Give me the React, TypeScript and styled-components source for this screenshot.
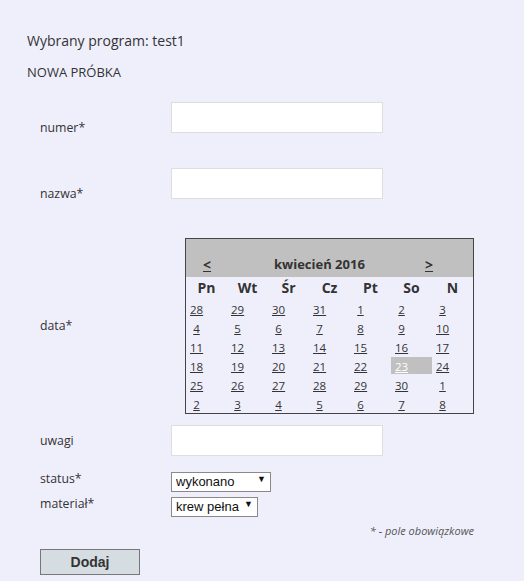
import React, { FC, ReactElement } from 'react';
import styled, { createGlobalStyle } from 'styled-components';

const GlobalStyle = createGlobalStyle`
    body {
        margin: 0;
        background: #efeffc;
        font-family: 'Open Sans', 'Noto Sans', sans-serif;
        color: #333;
    }
`;

const weekDays = ['Pn', 'Wt', 'Śr', 'Cz', 'Pt', 'So', 'N'];

const weeks: number[][] = [
    [28, 29, 30, 31, 1, 2, 3],
    [4, 5, 6, 7, 8, 9, 10],
    [11, 12, 13, 14, 15, 16, 17],
    [18, 19, 20, 21, 22, 23, 24],
    [25, 26, 27, 28, 29, 30, 1],
    [2, 3, 4, 5, 6, 7, 8],
];

const Calendar: FC = (): ReactElement => {
    return (
        <CalendarBox>
            <CalendarHead>
                <NavLink href="#">&lt;</NavLink>
                <MonthTitle>kwiecień 2016</MonthTitle>
                <NavLink href="#">&gt;</NavLink>
            </CalendarHead>
            <DayNames>
                {weekDays.map((d) => (
                    <DayName key={d}>{d}</DayName>
                ))}
            </DayNames>
            <DateGrid>
                {weeks.map((week, w) =>
                    week.map((day, i) => {
                        const selected = w === 3 && i === 5;
                        return (
                            <DateCell key={`${w}-${i}`} $selected={selected}>
                                <DateLink href="#" $selected={selected}>{day}</DateLink>
                            </DateCell>
                        );
                    })
                )}
            </DateGrid>
        </CalendarBox>
    );
};

const App: FC = (): ReactElement => {
    return (
        <Page>
            <GlobalStyle />
            <Heading>Wybrany program: test1</Heading>
            <SubHeading>NOWA PRÓBKA</SubHeading>
            <Form>
                <Row $gap={20}>
                    <Label>numer*</Label>
                    <Field>
                        <TextInput type="text" />
                        <Hint />
                    </Field>
                </Row>
                <Row $gap={15}>
                    <Label>nazwa*</Label>
                    <Field>
                        <TextInput type="text" />
                        <Hint />
                    </Field>
                </Row>
                <Row $gap={19}>
                    <Label>data*</Label>
                    <Field>
                        <Calendar />
                    </Field>
                </Row>
                <Row $gap={11}>
                    <Label>uwagi</Label>
                    <Field>
                        <TextInput type="text" />
                    </Field>
                </Row>
                <Row $gap={13}>
                    <Label>status*</Label>
                    <Field>
                        <SelectWrap $width={100}>
                            <Select defaultValue="wykonano">
                                <option>wykonano</option>
                                <option>w trakcie</option>
                            </Select>
                            <Arrow>▼</Arrow>
                        </SelectWrap>
                    </Field>
                </Row>
                <Row $gap={5}>
                    <Label>materiał*</Label>
                    <Field>
                        <SelectWrap $width={87}>
                            <Select defaultValue="krew pełna">
                                <option>krew pełna</option>
                                <option>osocze</option>
                            </Select>
                            <Arrow>▼</Arrow>
                        </SelectWrap>
                    </Field>
                </Row>
                <Note>* - pole obowiązkowe</Note>
                <SubmitButton type="button">Dodaj</SubmitButton>
            </Form>
        </Page>
    );
};

const Page = styled.div`
    padding: 31px 0 0 27px;
    width: 447px;
`;

const Heading = styled.div`
    font-size: 14px;
    line-height: 20px;
    height: 20px;
`;

const SubHeading = styled.div`
    margin-top: 11px;
    font-size: 13px;
    line-height: 20px;
    height: 20px;
`;

const Form = styled.div`
    margin-left: 13px;
    display: flex;
    flex-direction: column;
`;

const Row = styled.div<{ $gap: number }>`
    display: flex;
    align-items: center;
    margin-top: ${(p) => p.$gap}px;
`;

const Label = styled.div`
    width: 131px;
    flex-shrink: 0;
    font-size: 12.3px;
    line-height: 18px;
`;

const Field = styled.div`
    display: flex;
    flex-direction: column;
`;

const Hint = styled.div`
    height: 20px;
`;

const TextInput = styled.input`
    box-sizing: border-box;
    width: 212px;
    height: 31px;
    margin: 0;
    border: 1px solid #dedede;
    background: #fff;
    outline: none;
`;

const SelectWrap = styled.div<{ $width: number }>`
    position: relative;
    width: ${(p) => p.$width}px;
    height: 20px;
`;

const Select = styled.select`
    appearance: none;
    box-sizing: border-box;
    width: 100%;
    height: 20px;
    margin: 0;
    padding: 0 0 0 4px;
    border: 1px solid #8a8a8a;
    border-radius: 0;
    background: #fff;
    color: #111;
    font-family: 'Liberation Sans', Arial, sans-serif;
    font-size: 13px;
    outline: none;
`;

const Arrow = styled.span`
    position: absolute;
    right: 5px;
    top: 4px;
    font-size: 9px;
    line-height: 12px;
    color: #111;
    pointer-events: none;
`;

const CalendarBox = styled.div`
    box-sizing: border-box;
    width: 289px;
    margin-left: 14px;
    border: 1px solid #444;
`;

const CalendarHead = styled.div`
    display: grid;
    grid-template-columns: 88px 1fr 48px;
    align-items: end;
    height: 38px;
    padding-bottom: 3px;
    box-sizing: border-box;
    background: #c0c0c0;
    font-size: 13px;
    font-weight: 700;
`;

const NavLink = styled.a`
    color: #333;
    font-size: 14px;
    font-weight: 700;
    text-decoration: underline;
    padding-left: 17px;
    line-height: 19px;

    &:last-child {
        padding-left: 0;
    }
`;

const MonthTitle = styled.span`
    line-height: 19px;
    color: #333;
`;

const DayNames = styled.div`
    display: grid;
    grid-template-columns: repeat(7, 1fr);
    height: 22px;
`;

const DayName = styled.div`
    line-height: 22px;
    text-align: center;
    font-size: 14px;
    font-weight: 700;
    color: #333;
`;

const DateGrid = styled.div`
    display: grid;
    grid-template-columns: repeat(7, 1fr);
    grid-auto-rows: 19px;
`;

const DateCell = styled.div<{ $selected: boolean }>`
    padding-left: 4px;
    margin: 1px 0;
    height: 17px;
    line-height: 17px;
    background: ${(p) => (p.$selected ? '#c0c0c0' : 'transparent')};
`;

const DateLink = styled.a<{ $selected: boolean }>`
    display: inline-block;
    width: 13px;
    text-align: center;
    font-size: 11.5px;
    color: ${(p) => (p.$selected ? '#fff' : '#333')};
    text-decoration: underline;
`;

const Note = styled.div`
    margin-top: 9px;
    width: 434px;
    text-align: right;
    font-size: 11px;
    line-height: 16px;
    font-style: italic;
    color: #555;
`;

const SubmitButton = styled.button`
    margin-top: 10px;
    width: 100px;
    height: 26px;
    padding: 0;
    border: 1px solid #777;
    background: #d5dde2;
    color: #333;
    font-family: 'Liberation Sans', Arial, sans-serif;
    font-size: 14px;
    font-weight: 700;
`;

export default App;
